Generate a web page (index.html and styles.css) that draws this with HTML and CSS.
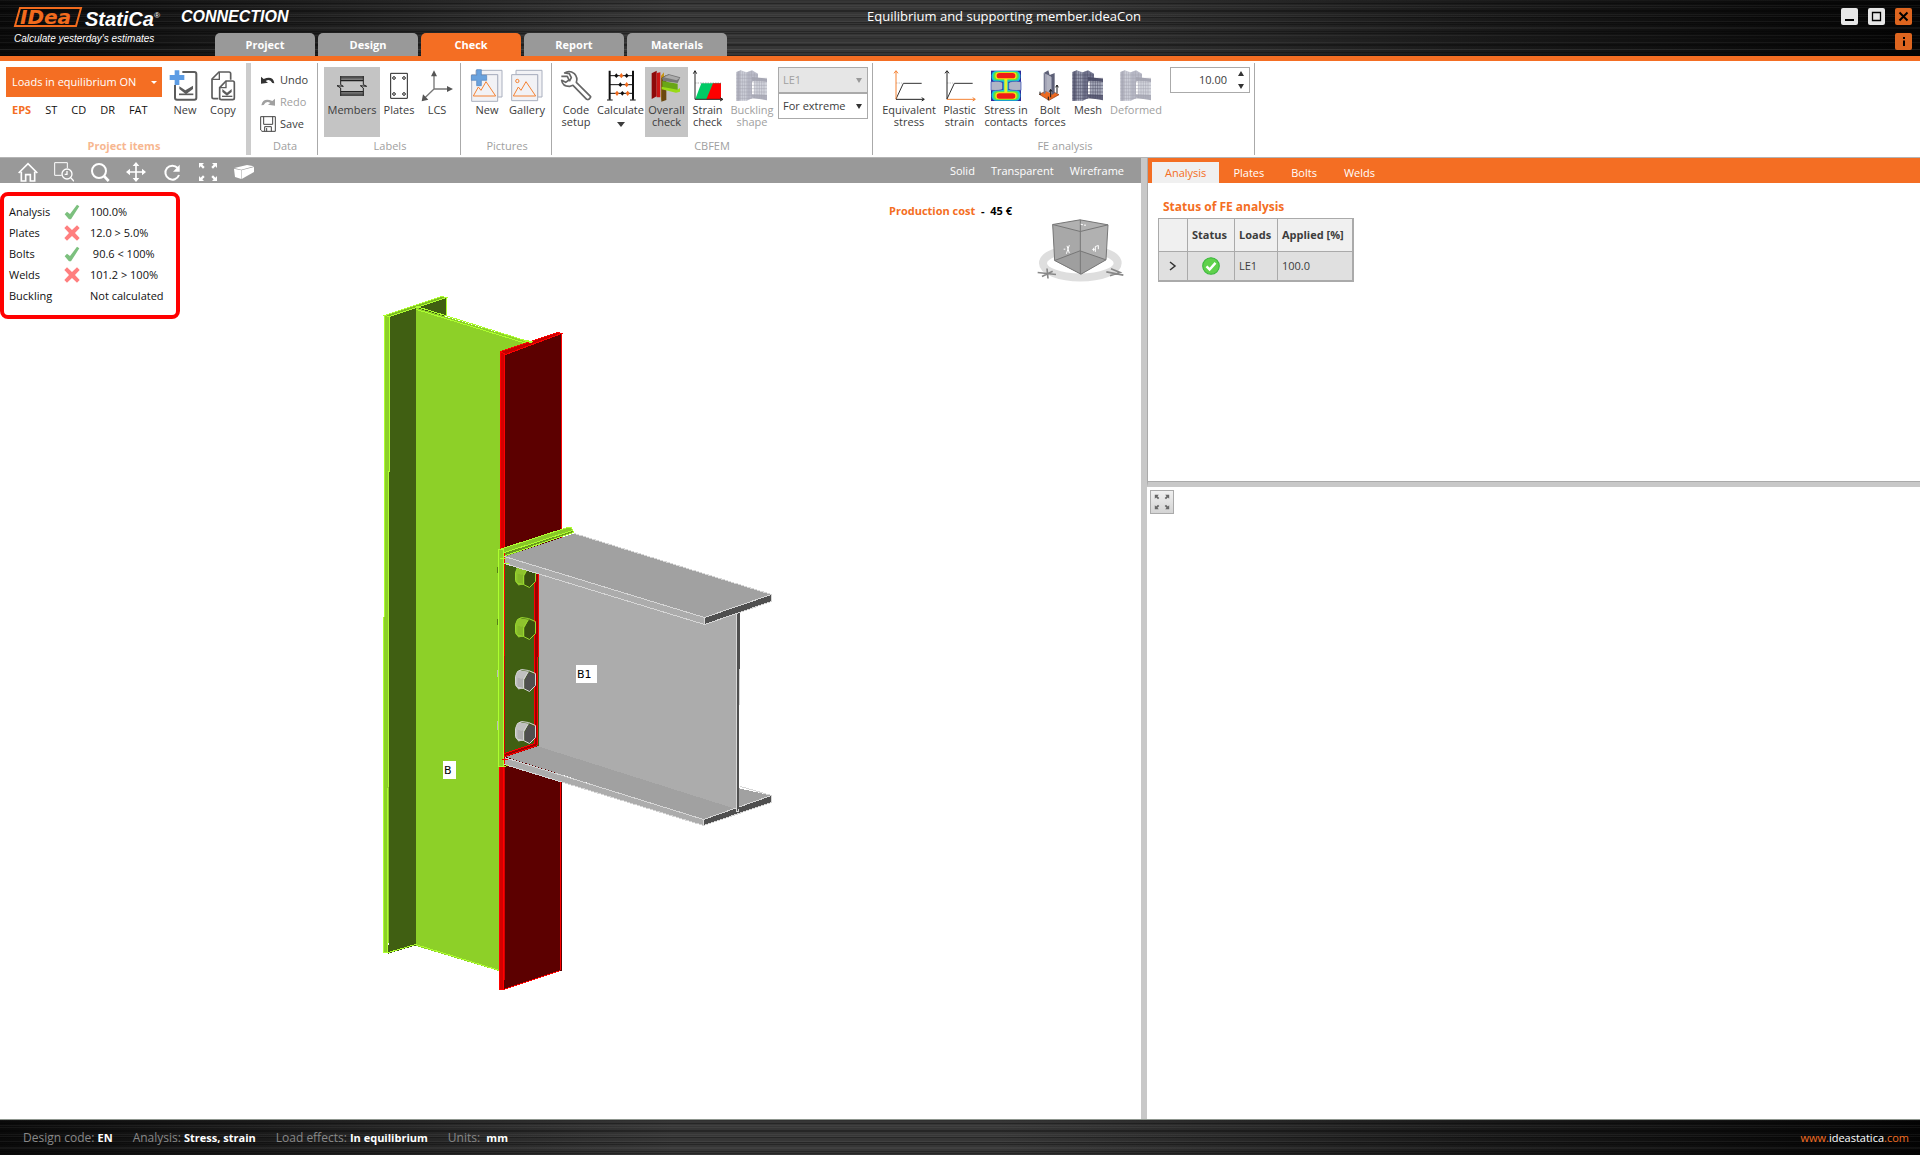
FILE: index.html
```html
<!DOCTYPE html>
<html lang="en">
<head>
    <meta charset="UTF-8">
    <meta name="viewport" content="width=device-width, initial-scale=1.0">
    <title>Equilibrium and supporting member.ideaCon</title>
    <link rel="stylesheet" href="styles.css">
</head>
<body>
    <header class="titlebar metal">
        <div class="brand">
            <div class="brand-row">
                <svg class="logo" viewBox="0 0 68 26" width="68" height="26">
                    <path d="M6 4H67L62 22H1Z" fill="none" stroke="#f26b1d" stroke-width="2"/>
                    <text x="6" y="20" class="logo-text">IDea</text>
                </svg>
                <span class="brand-name">StatiCa<sup>®</sup></span>
                <span class="brand-module">CONNECTION</span>
            </div>
            <div class="tagline">Calculate yesterday's estimates</div>
        </div>
        <nav class="tabs">
            <button class="tab">Project</button>
            <button class="tab">Design</button>
            <button class="tab active">Check</button>
            <button class="tab">Report</button>
            <button class="tab">Materials</button>
        </nav>
        <div class="doc-title">Equilibrium and supporting member.ideaCon</div>
        <div class="window-buttons">
            <button class="win" aria-label="Minimize"><svg viewBox="0 0 17 17" width="17" height="17"><path d="M4 12H13" stroke="#000" stroke-width="2"/></svg></button>
            <button class="win" aria-label="Maximize"><svg viewBox="0 0 17 17" width="17" height="17"><path d="M4.500 4.500H12.500V12.500H4.500Z" fill="none" stroke="#000" stroke-width="1.300"/></svg></button>
            <button class="win orange" aria-label="Close"><svg viewBox="0 0 17 17" width="17" height="17"><path d="M4.500 4.500L12.500 12.500M12.500 4.500L4.500 12.500" stroke="#000" stroke-width="2"/></svg></button>
            <button class="win orange info" aria-label="Info"><svg viewBox="0 0 17 17" width="17" height="17"><path d="M9 4V6M9 7.500V13" stroke="#000" stroke-width="2"/></svg></button>
        </div>
    </header>

    <section class="ribbon">
        <div class="group project-group">
            <div class="tools">
                <div class="item-box">
                    <button class="item-select">Loads in equilibrium ON <span class="caret"></span></button>
                    <div class="item-types">
                        <button class="type active">EPS</button>
                        <button class="type">ST</button>
                        <button class="type">CD</button>
                        <button class="type">DR</button>
                        <button class="type">FAT</button>
                    </div>
                </div>
                <button class="tool w38">
                    <svg class="icon" viewBox="0 0 96 96">
                        <path d="M40 9H76Q82 9 82 15V86Q82 92 76 92H24Q18 92 18 86V48" fill="none" stroke="#5c5c5c" stroke-width="6"/>
                        <path d="M31 52L49 64L72 50V60L51 76L31 60Z" fill="#5c5c5c"/><path d="M30 76H73" stroke="#5c5c5c" stroke-width="5"/>
                        <path d="M17 4H31V18H46V33H31V48H17V33H2V18H17Z" fill="#5c9ce4"/>
                    </svg>
                    New
                </button>
                <button class="tool w38">
                    <svg class="icon" viewBox="0 0 96 96">
                        <path d="M34 89H20Q15 89 15 84V30L36 9H66Q71 9 71 14V32" fill="none" stroke="#5c5c5c" stroke-width="5"/>
                        <path d="M15 31H37V9" fill="none" stroke="#5c5c5c" stroke-width="4"/>
                        <path d="M38 56L57 36H77Q82 36 82 41V87Q82 92 77 92H43Q38 92 38 87Z" fill="#fff" stroke="#5c5c5c" stroke-width="5"/>
                        <path d="M38 56H57V36" fill="none" stroke="#5c5c5c" stroke-width="4"/>
                        <path d="M46 60L60 71L74 60V69L60 80L46 69Z" fill="#5c5c5c"/><path d="M45 82H76" stroke="#5c5c5c" stroke-width="4"/>
                    </svg>
                    Copy
                </button>
            </div>
            <div class="group-name">Project items</div>
        </div>

        <div class="group data-group">
            <div class="tools data-tools">
                <button class="line-tool">
                    <svg viewBox="0 0 48 48" width="16" height="16"><path d="M3 14V35L24 32L17 27Q29 18 37 33L43 34Q39 10 11 21Z" fill="#333"/></svg>
                    Undo
                </button>
                <button class="line-tool" disabled>
                    <svg viewBox="0 0 48 48" width="16" height="16"><path d="M45 14V35L24 32L31 27Q19 18 11 33L4 34Q9 10 37 21Z" fill="#a0a0a0"/></svg>
                    Redo
                </button>
                <button class="line-tool">
                    <svg viewBox="0 0 48 48" width="16" height="16"><path d="M2 2H46V46H6L2 42Z M11 2V25H38V2 M14 46V32H34V46 M20 36V46" fill="none" stroke="#444" stroke-width="3"/></svg>
                    Save
                </button>
            </div>
            <div class="group-name">Data</div>
        </div>

        <div class="group">
            <div class="tools">
                <button class="tool w56 active">
                    <svg class="icon" viewBox="0 0 96 96">
                        <path d="M14 24H82M14 35H82M14 68H82M14 78H82" stroke="#222" stroke-width="4"/>
                        <path d="M14 29H82M14 73H82" stroke="#666" stroke-width="6"/>
                        <path d="M14 21V47L22 52L3 50L14 57V81M82 21V47L92 52L73 50L82 57V81" fill="none" stroke="#222" stroke-width="3"/>
                    </svg>
                    Members
                </button>
                <button class="tool w38">
                    <svg class="icon" viewBox="0 0 96 96">
                        <path d="M23 13H73V88H23Z" fill="#fff" stroke="#222" stroke-width="3"/>
                        <g fill="none" stroke="#222" stroke-width="3"><circle cx="33" cy="27" r="4"/><circle cx="63" cy="27" r="4"/><circle cx="33" cy="75" r="4"/><circle cx="63" cy="75" r="4"/></g>
                    </svg>
                    Plates
                </button>
                <button class="tool w38">
                    <svg class="icon" viewBox="0 0 96 96">
                        <path d="M39 14V60H84M39 60L8 90" fill="none" stroke="#777" stroke-width="4"/>
                        <path d="M30 22L39 4L48 22ZM78 51L96 60L78 69ZM2 97L6 76L22 92Z" fill="#555"/>
                    </svg>
                    LCS
                </button>
            </div>
            <div class="group-name">Labels</div>
        </div>

        <div class="group">
            <div class="tools">
                <button class="tool w40">
                    <svg class="icon" viewBox="0 0 96 96">
                        <path d="M15 4H93V84H80V17H15Z" fill="#f2f2f5" stroke="#aab0bf" stroke-width="3"/>
                        <path d="M2 17H80V97H2Z" fill="#f2f2f5" stroke="#aab0bf" stroke-width="3"/>
                        <path d="M7 81L22 54L30 64L45 38L74 81Z" fill="none" stroke="#f58233" stroke-width="3"/>
                        <path d="M17 2H31V19H47V34H31V50H17V34H1V19H17Z" fill="#6aa2dd" stroke="#4e82bd" stroke-width="2"/>
                    </svg>
                    New
                </button>
                <button class="tool w40">
                    <svg class="icon" viewBox="0 0 96 96">
                        <path d="M15 4H93V84H80V17H15Z" fill="#f2f2f5" stroke="#aab0bf" stroke-width="3"/>
                        <path d="M2 17H80V95H2Z" fill="#f2f2f5" stroke="#aab0bf" stroke-width="3"/>
                        <circle cx="19" cy="36" r="5" fill="none" stroke="#f58233" stroke-width="3"/>
                        <path d="M7 81L22 54L30 64L45 38L74 81Z" fill="none" stroke="#f58233" stroke-width="3"/>
                    </svg>
                    Gallery
                </button>
            </div>
            <div class="group-name">Pictures</div>
        </div>

        <div class="group cbfem-group">
            <div class="tools">
                <button class="tool w40">
                    <svg class="icon" viewBox="0 0 96 96">
                        <path d="M4 22H22L27 33L17 40L5 34Q8 53 30 52L39 49L80 91Q87 94 91 86L92 83L49 40Q54 26 43 14Q28 2 14 12L28 14L34 26L28 37" fill="none" stroke="#666" stroke-width="5" stroke-linejoin="round"/>
                    </svg>
                    Code setup
                </button>
                <button class="tool w49">
                    <svg class="icon" viewBox="0 0 96 96">
                        <path d="M14 5V92M84 5V92" stroke="#111" stroke-width="6"/><path d="M6 93H23M75 93H92M14 20H84M14 47H84M14 73H84" stroke="#111" stroke-width="3"/>
                        <g fill="#111"><path d="M28 20L34 13L40 20L34 27ZM59 20L65 13L71 20L65 27ZM40 47L46 40L52 47L46 54ZM46 73L52 66L58 73L52 80Z"/></g>
                        <g fill="#f26b1d"><path d="M43 20L49 12L55 20L49 28ZM59 47L65 39L71 47L65 55ZM30 73L36 65L42 73L36 81ZM62 73L68 65L74 73L68 81Z"/></g>
                    </svg>
                    Calculate <span class="caret dark"></span>
                </button>
                <button class="tool w43 active">
                    <svg class="icon" viewBox="0 0 96 96">
                        <path d="M2 13L17 5V82L2 90Z" fill="#8e0909"/><path d="M17 12L28 10V85H17Z" fill="#c91515"/>
                        <path d="M30 20L39 10V96L30 92Z" fill="#c59516"/><path d="M31 27L46 18V93L31 98Z" fill="#6a4810"/>
                        <path d="M33 27L52 15L88 25L80 42L36 36Z" fill="#777"/><path d="M38 25L54 18L86 27L77 34Z" fill="#aaa"/>
                        <path d="M34 36L80 44V67L34 55Z" fill="#69a616"/><path d="M32 53L80 62L87 57V68L75 71L32 61Z" fill="#99db16"/>
                    </svg>
                    Overall check
                </button>
                <button class="tool w39">
                    <svg class="icon" viewBox="0 0 96 96">
                        <path d="M28 43H87V90H10Z" fill="#00ca65"/><path d="M63 43H87V91H43Z" fill="#f00"/>
                        <path d="M9 8V91H90M4 14L9 5L14 14M84 86L93 91L84 96" fill="none" stroke="#222" stroke-width="3"/>
                        <path d="M9 42H87" stroke="#555" stroke-width="2" stroke-dasharray="2 3"/>
                    </svg>
                    Strain check
                </button>
                <button class="tool w50" disabled>
                    <svg class="icon faded" viewBox="0 0 96 96"><use href="#mesh-icon"/></svg>
                    Buckling shape
                </button>
                <div class="selects">
                    <div class="select-wrap off"><select aria-label="Load effect" disabled><option>LE1</option></select></div>
                    <div class="select-wrap"><select aria-label="Display for"><option>For extreme</option></select></div>
                </div>
            </div>
            <div class="group-name">CBFEM</div>
        </div>

        <div class="group fe-group">
            <div class="tools">
                <button class="tool w58">
                    <svg class="icon" viewBox="0 0 96 96">
                        <path d="M9 42H28" stroke="#777" stroke-width="2" stroke-dasharray="2 3"/><path d="M9 90L31 43H86" fill="none" stroke="#333" stroke-width="3"/>
                        <path d="M9 91V6M3 13L9 5L15 13" fill="none" stroke="#f58233" stroke-width="3"/><path d="M9 91H93M86 86L94 91L86 96" fill="none" stroke="#222" stroke-width="3"/>
                    </svg>
                    Equivalent stress
                </button>
                <button class="tool w43">
                    <svg class="icon" viewBox="0 0 96 96">
                        <path d="M9 42H28" stroke="#777" stroke-width="2" stroke-dasharray="2 3"/><path d="M9 90L31 43H86" fill="none" stroke="#333" stroke-width="3"/>
                        <path d="M9 91V6M3 13L9 5L15 13" fill="none" stroke="#222" stroke-width="3"/><path d="M9 91H93M86 86L94 91L86 96" fill="none" stroke="#f58233" stroke-width="3"/>
                    </svg>
                    Plastic strain
                </button>
                <button class="tool w50">
                    <svg class="icon" viewBox="0 0 96 96">
                        <path d="M3 5H93V96H3Z" fill="#2a2b9c"/>
                        <g><rect x="5" y="6" width="86" height="32" rx="13" fill="#16c8dc"/><rect x="5" y="63" width="86" height="32" rx="13" fill="#16c8dc"/></g>
                        <path d="M3 38Q32 34 38 42V60Q32 66 3 64ZM93 38Q62 34 56 42V60Q62 66 93 64Z" fill="#b0b5c6" stroke="#2f45b5" stroke-width="2"/>
                        <path d="M40 30H55V72H40Z" fill="#16c8dc"/>
                        <g><rect x="10" y="8" width="76" height="26" rx="12" fill="#62e33a"/><rect x="10" y="67" width="76" height="26" rx="12" fill="#62e33a"/><path d="M43 30H52V71H43Z" fill="#e7ef28"/></g>
                        <g fill="#ffdf12"><rect x="16" y="10" width="64" height="21" rx="10"/><rect x="16" y="70" width="64" height="21" rx="10"/></g>
                        <g fill="#f01c16"><rect x="20" y="12" width="56" height="16" rx="8"/><rect x="20" y="73" width="56" height="16" rx="8"/></g>
                    </svg>
                    Stress in contacts
                </button>
                <button class="tool w38">
                    <svg class="icon" viewBox="0 0 96 96">
                        <path d="M16 76L45 62L75 77L45 94Z" fill="#ed6a20" stroke="#8b350b" stroke-width="2"/>
                        <path d="M29 12L35 15V72L29 76Z" fill="#777b91"/><path d="M35 15L55 24V75L35 67Z" fill="#9fa1b4"/><path d="M29 12L43 4L47 18L62 12V72L53 79V25Z" fill="#5d6077"/><path d="M38 16L51 23V70L38 66Z" fill="#b1b3c1"/>
                        <path d="M50 85V63M46 68L50 61L54 68M69 73V49M65 55L69 48L73 55M18 78V68M43 94V83" stroke="#1a1a1a" stroke-width="3" fill="none"/>
                    </svg>
                    Bolt forces
                </button>
                <button class="tool w38">
                    <svg class="icon" viewBox="0 0 96 96">
                        <g id="mesh-icon">
                            <path d="M1 9L14 4V95L1 96Z" fill="#696b84"/><path d="M14 4L32 10V95H14Z" fill="#9fa3b7"/>
                            <path d="M32 10L48 4L66 14V30L48 38V88L32 95Z" fill="#777a93"/>
                            <path d="M48 24L93 29V39L48 35Z" fill="#52546e"/><path d="M55 35L93 39V79L55 78Z" fill="#a9adbd"/><path d="M48 76L93 78V94L48 86Z" fill="#60627b"/>
                            <path d="M7 7V95M14 4V95M20 7V95M26 9V95M32 10V95M39 8V91M46 6V89M55 12V87M63 17V87M70 28V88M77 28V89M84 29V90M1 18H66M1 28H93M1 39H93M1 49H93M1 59H93M1 69H93M1 79H93M1 88H70" stroke="#4a4b63" stroke-width="1.500"/>
                        </g>
                    </svg>
                    Mesh
                </button>
                <button class="tool w58" disabled>
                    <svg class="icon faded" viewBox="0 0 96 96"><use href="#mesh-icon"/></svg>
                    Deformed
                </button>
                <div class="spinner">
                    <input type="text" value="10.00" aria-label="Deformation scale">
                    <svg viewBox="0 0 8 20" width="8" height="20"><path d="M1 6L4 1L7 6ZM1 14H7L4 19Z" fill="#333"/></svg>
                </div>
            </div>
            <div class="group-name">FE analysis</div>
        </div>
    </section>

    <main class="workspace">
        <section class="view-pane">
            <div class="view-bar">
                <button class="view-tool" aria-label="Home"><svg viewBox="0 0 60 60" width="20" height="20"><path d="M2 33L30 5L58 33M10 29V57H23V38H37V57H50V29" fill="none" stroke="#fff" stroke-width="5"/></svg></button>
                <button class="view-tool" aria-label="Zoom window"><svg viewBox="0 0 60 60" width="20" height="20"><path d="M23 40H2V2H40V18" fill="none" stroke="#fff" stroke-width="3"/><circle cx="39" cy="36" r="15" fill="none" stroke="#fff" stroke-width="4"/><path d="M50 47L60 58M39 27V37H32" fill="none" stroke="#fff" stroke-width="4"/></svg></button>
                <button class="view-tool" aria-label="Zoom"><svg viewBox="0 0 60 60" width="20" height="20"><circle cx="27" cy="27" r="21" fill="none" stroke="#fff" stroke-width="6"/><path d="M42 42L56 57" stroke="#fff" stroke-width="8"/></svg></button>
                <button class="view-tool" aria-label="Pan"><svg viewBox="0 0 60 60" width="20" height="20"><path d="M30 5V55M5 30H55" stroke="#fff" stroke-width="5"/><path d="M20 12L30 0L40 12ZM20 48L30 60L40 48ZM12 20L0 30L12 40ZM48 20L60 30L48 40Z" fill="#fff"/></svg></button>
                <button class="view-tool" aria-label="Rotate"><svg viewBox="0 0 60 60" width="20" height="20"><path d="M47 18A21 21 0 1 0 51 39" fill="none" stroke="#fff" stroke-width="6"/><path d="M53 8V29H33Z" fill="#fff"/></svg></button>
                <button class="view-tool" aria-label="Zoom all"><svg viewBox="0 0 60 60" width="20" height="20"><path d="M3 3H18L13 8L20 15L15 20L8 13L3 18ZM57 3V18L52 13L45 20L40 15L47 8L42 3ZM3 57V42L8 47L15 40L20 45L13 52L18 57ZM57 57H42L47 52L40 45L45 40L52 47L57 42Z" fill="#fff"/></svg></button>
                <button class="view-tool" aria-label="Perspective"><svg viewBox="0 0 60 60" width="20" height="20"><path d="M0 20L22 25V51L3 45Z" fill="#fff"/><path d="M1 18L39 9L60 13L22 23Z" fill="#fff"/><path d="M23 25L60 15V30L23 51Z" fill="#fff"/></svg></button>
                <div class="view-modes">
                    <button>Solid</button>
                    <button>Transparent</button>
                    <button>Wireframe</button>
                </div>
            </div>

            <div class="viewport">
                <svg class="scene" viewBox="0 183 1141 936">
                    <defs>
                        <g id="bolt">
                            <path d="M-4 -11L-8 -9L-10 -4V5L-7 9L-3 8Z" fill="var(--b)"/>
                            <path d="M-8 -3L-1 -1V8L-8 6Z" fill="var(--a)"/>
                            <path d="M-8 -3L-4 -10L3 -9L-1 -1Z" fill="var(--b)"/>
                            <path d="M-1 0L3 -8L10 -6V5L4 11L-1 8Z" fill="var(--d)"/>
                            <path d="M-8 7L-10 4V-4L-8 -9L-4 -11L3 -10L10 -7V5L4 11L-2 8Z" fill="none" stroke="var(--c)"/>
                            <path d="M-2 8V-1L3 -9" fill="none" stroke="var(--c)"/>
                        </g>
                    </defs>
                    <g transform="translate(0.500 0.500)">
                        <!-- column web and left flange -->
                        <path d="M416 307L446 297V315L441 318Z" fill="#405f12"/>
                        <path d="M446 297V315" stroke="#adff2f"/>
                        <path d="M415 307L530 342L500 352V971L414 945Z" fill="#8dd028"/>
                        <path d="M389 316L415 307V945L388 953Z" fill="#405f12"/>
                        <path d="M384 316L389 314L388 952H383Z" fill="#8dd028"/>
                        <path d="M384 315L441 296L446 297L389 316Z" fill="#7db923" stroke="#adff2f"/>
                        <path d="M416 306L531 342M416 309L526 343" stroke="#adff2f"/>
                        <path d="M384 315L383 952H387L389 316M388 952L415 944L499 970" fill="none" stroke="#adff2f"/>
                        <!-- right flange -->
                        <path d="M505 353L561 333V970L504 989Z" fill="#5c0000"/>
                        <path d="M500 352H505L504 989H499Z" fill="#d40000"/>
                        <path d="M500 351L557 332L561 333L505 354Z" fill="#c40000" stroke="#f00"/>
                        <path d="M500 352L499 989H503L560 970L561 333M504 354L503 989" fill="none" stroke="#f00"/>
                        <path d="M525 340L532 342" stroke="#adff2f" stroke-width="2"/>
                        <!-- bolt ends behind the plate -->
                        <path d="M496 566H499V572H496ZM496 618H499V624H496Z" fill="#56801a"/>
                        <path d="M496 669H499V676H496ZM496 720H499V729H496Z" fill="#bcbcbc"/>
                        <!-- bottom flange of the beam -->
                        <path d="M504 756L538 744L771 795L703 819Z" fill="#a1a1a1"/>
                        <path d="M538 573L737 605V809L538 746Z" fill="#acacac"/>
                        <path d="M740 600H773V796L740 786Z" fill="#fff"/>
                        <path d="M504 757L703 819V825L504 764Z" fill="#acacac"/>
                        <path d="M703 819L771 795V802L703 825Z" fill="#4f4f4f"/>
                        <path d="M504 757L703 819L771 795M504 764L703 825L771 802V795L740 786M703 819V825" fill="none" stroke="#d6d6d6"/>
                        <path d="M736 608H739L738 811H736Z" fill="#4f4f4f" stroke="#d6d6d6"/>
                        <path d="M737 612H739V668H737Z" fill="#4f4f4f"/>
                        <path d="M736 668H738V808H736Z" fill="#4f4f4f"/>
                        <!-- end plate -->
                        <path d="M504 562L538 573V745L504 756Z" fill="#405f12"/>
                        <path d="M534 571L538 573L537 746L504 757V753L534 743Z" fill="#9e0000"/>
                        <path d="M534 571V743L504 753M538 573L537 745L504 756" fill="none" stroke="#f00"/>
                        <!-- bolts -->
                        <g class="bolts bolt-green"><use href="#bolt" x="525" y="576"/><use href="#bolt" x="525" y="628"/></g>
                        <g class="bolts bolt-gray"><use href="#bolt" x="525" y="680"/><use href="#bolt" x="525" y="732"/></g>
                        <!-- top flange of the beam -->
                        <path d="M504 556L574 533L771 594L704 617Z" fill="#a1a1a1"/>
                        <path d="M504 556L704 617V624L504 563Z" fill="#acacac"/>
                        <path d="M704 617L771 594V601L704 624Z" fill="#4f4f4f"/>
                        <path d="M504 556L704 617L771 594M504 563L704 624L771 601V594L574 533M704 617V624" fill="none" stroke="#d6d6d6"/>
                        <path d="M503 549L569 526L573 532L505 556Z" fill="#69971d"/>
                        <path d="M499 549L566 527H571L572 530L504 552Z" fill="#88c727"/>
                        <path d="M499 549L567 527H571L573 532L505 555M504 552L572 530" fill="none" stroke="#adff2f"/>
                        <path d="M498 549H503V766H498Z" fill="#8dd028" stroke="#adff2f"/>
                        <path d="M504 757V763M501 759H507" stroke="#f00"/>
                        <path d="M503 766L508 765M499 558H505M504 563H508" stroke="#adff2f"/>
                    </g>
                    <rect x="443" y="761" width="13" height="18" fill="#fff"/>
                    <text x="444" y="774" class="member-label">B</text>
                    <rect x="576" y="665" width="21" height="18" fill="#fff"/>
                    <text x="577" y="678" class="member-label">B1</text>
                </svg>

                <table class="check-box">
                    <tr><th scope="row">Analysis</th><td><svg class="mark" viewBox="0 0 48 48"><use href="#ok"/></svg></td><td>100.0%</td></tr>
                    <tr><th scope="row">Plates</th><td><svg class="mark" viewBox="0 0 48 48"><use href="#bad"/></svg></td><td>12.0 &gt; 5.0%</td></tr>
                    <tr><th scope="row">Bolts</th><td><svg class="mark" viewBox="0 0 48 48"><path id="ok" d="M2 31L9 23L18 30L39 2L46 7L21 46H15Z" fill="#7cc07e"/></svg></td><td>&nbsp;90.6 &lt; 100%</td></tr>
                    <tr><th scope="row">Welds</th><td><svg class="mark" viewBox="0 0 48 48"><path id="bad" d="M9 1L24 15L39 1L47 9L33 24L47 39L39 47L24 33L9 47L1 39L15 24L1 9Z" fill="#ff7f7f"/></svg></td><td>101.2 &gt; 100%</td></tr>
                    <tr><th scope="row">Buckling</th><td></td><td>Not calculated</td></tr>
                </table>

                <div class="cost"><span>Production cost</span>&nbsp; - &nbsp;45 €</div>

                <svg class="nav-cube" viewBox="530 200 270 200">
                    <ellipse cx="663" cy="338" rx="112" ry="43" fill="none" stroke="#dedede" stroke-width="24"/>
                    <path d="M580 222L662 208L746 223L740 328L665 371L586 330Z" fill="#b1b1b1"/>
                    <path d="M580 222L663 243L665 371L586 330Z" fill="#a8a8a8"/>
                    <path d="M586 330L662 301L740 328L665 371Z" fill="#9f9f9f"/>
                    <path d="M580 222L662 208L746 223L740 328L665 371L586 330ZM580 222L663 243L746 223M663 208V371M586 330L662 301L740 328" fill="none" stroke="#777" stroke-width="3"/>
                    <path d="M613 296H618M623 286L630 308M630 284L621 310M699 297H706M703 292V302M708 288V304M708 288L717 285V296M664 221L671 223M674 224H680" stroke="#fff" stroke-width="3" fill="none"/>
                    <path d="M535 366L590 372M548 378L580 362M563 354L566 384M741 364L792 374M755 355L782 366L752 376" stroke="#888" stroke-width="5" fill="none"/>
                </svg>
            </div>
        </section>

        <section class="side-pane">
            <div class="result-pane">
                <nav class="side-tabs">
                    <button class="side-tab active">Analysis</button>
                    <button class="side-tab">Plates</button>
                    <button class="side-tab">Bolts</button>
                    <button class="side-tab">Welds</button>
                </nav>
                <h2>Status of FE analysis</h2>
                <table class="status-table">
                    <thead>
                        <tr><th class="col-open"></th><th class="col-status">Status</th><th class="col-loads">Loads</th><th class="col-applied">Applied [%]</th></tr>
                    </thead>
                    <tbody>
                        <tr>
                            <td class="center"><svg viewBox="0 0 8 12" width="8" height="12"><path d="M1 2L6 6L1 10" fill="none" stroke="#333" stroke-width="1.500"/></svg></td>
                            <td class="center"><svg viewBox="0 0 52 52" width="18" height="18"><circle cx="26" cy="26" r="24" fill="#5fd14b" stroke="#37b53a" stroke-width="3"/><path d="M13 27L22 36L39 17" fill="none" stroke="#fff" stroke-width="7"/></svg></td>
                            <td>LE1</td>
                            <td>100.0</td>
                        </tr>
                    </tbody>
                </table>
            </div>
            <div class="detail-pane">
                <button class="fit-button" aria-label="Zoom all"><svg viewBox="0 0 60 60" width="16" height="16"><path d="M3 3H18L13 8L20 15L15 20L8 13L3 18ZM57 3V18L52 13L45 20L40 15L47 8L42 3ZM3 57V42L8 47L15 40L20 45L13 52L18 57ZM57 57H42L47 52L40 45L45 40L52 47L57 42Z" fill="#666"/></svg></button>
            </div>
        </section>
    </main>

    <footer class="statusbar metal">
        <div>Design code: <b>EN</b></div>
        <div>Analysis: <b>Stress, strain</b></div>
        <div>Load effects: <b>In equilibrium</b></div>
        <div>Units: &nbsp;<b>mm</b></div>
        <a href="#" class="site">www.<span>ideastatica</span>.com</a>
    </footer>
</body>
</html>
```
FILE: styles.css
```css
* {
    box-sizing: border-box;
}

body {
    margin: 0;
    height: 100vh;
    display: flex;
    flex-direction: column;
    font-family: 'Open Sans', 'Noto Sans', sans-serif;
    font-size: 11px;
    line-height: 12px;
    color: #3c3c3c;
    background-color: white;
    overflow: hidden;
}

button, input, select {
    font: inherit;
    color: inherit;
    border: none;
    background: none;
    padding: 0;
    margin: 0;
}

button {
    cursor: pointer;
}

svg {
    display: block;
    flex-shrink: 0;
}

.metal {
    background:
        repeating-linear-gradient(180deg, rgba(255, 255, 255, 0.05) 0 1px, transparent 1px 3px, rgba(0, 0, 0, 0.3) 3px 4px, transparent 4px 7px),
        repeating-linear-gradient(180deg, rgba(0, 0, 0, 0.3) 0 1px, transparent 1px 5px, rgba(255, 255, 255, 0.05) 5px 6px, transparent 6px 11px),
        linear-gradient(90deg, #0a0a0a, #181818 12%, #363636 35%, #363636 52%, #181818 78%, #040404);
}

/* title bar */
.titlebar {
    display: flex;
    height: 61px;
    flex-shrink: 0;
    border-bottom: 5px solid #f46e23;
}

.brand {
    width: 215px;
    flex-shrink: 0;
    padding: 4px 0 0 14px;
    color: white;
    font-family: 'Liberation Sans', Arial, sans-serif;
    font-style: italic;
    white-space: nowrap;
}

.brand-row {
    display: flex;
    height: 26px;
    align-items: center;
}

.logo {
    overflow: visible;
}

.logo-text {
    font-family: 'DejaVu Sans', sans-serif;
    font-size: 20px;
    font-weight: bold;
    font-style: italic;
    fill: #f26b1d;
}

.brand-name {
    flex-shrink: 0;
    font-size: 20px;
    font-weight: bold;
    padding-left: 3px;
    width: 99px;
}

.brand-name sup {
    font-size: 8px;
    font-weight: normal;
}

.brand-module {
    font-size: 16px;
    font-weight: bold;
}

.tagline {
    margin-top: 3px;
    font-size: 10px;
}

.tabs {
    display: flex;
    align-items: flex-end;
    gap: 3px;
}

.tab {
    width: 100px;
    height: 23px;
    border-radius: 5px 5px 0 0;
    background-color: #999;
    color: white;
    font-weight: bold;
}

.tab.active {
    background-color: #f46e23;
}

.doc-title {
    flex: 1;
    padding: 8px 0 0 140px;
    font-size: 13px;
    line-height: 16px;
    color: white;
}

.window-buttons {
    display: grid;
    grid-template-columns: 17px 17px 17px;
    grid-auto-rows: 17px;
    gap: 8px 10px;
    padding: 8px 8px 0 0;
}

.win {
    border-radius: 2px;
    background-color: #e6e6e6;
}

.win.orange {
    background-color: #dd651f;
}

.win.info {
    grid-column: 3;
}

/* ribbon */
.ribbon {
    display: flex;
    height: 97px;
    flex-shrink: 0;
    padding: 2px 0;
    border-bottom: 1px solid #b4b4b4;
}

.group {
    display: flex;
    flex-direction: column;
    flex-shrink: 0;
    justify-content: space-between;
    padding: 4px 4px 2px 6px;
    border-right: 1px solid #aaa;
}

.project-group {
    width: 251px;
    border-right: 5px solid #ccc;
}

.data-group {
    width: 67px;
}

.cbfem-group {
    padding-left: 4px;
}

.fe-group {
    padding-left: 7px;
}

.tools {
    display: flex;
    align-items: flex-start;
}

.group-name {
    text-align: center;
    line-height: 14px;
    color: #a0a0a0;
}

.project-group .group-name {
    color: #f7b790;
    font-weight: bold;
}

.item-box {
    width: 156px;
    flex-shrink: 0;
    margin-right: 4px;
}

.item-select {
    display: flex;
    width: 100%;
    height: 30px;
    padding: 0 5px 0 6px;
    align-items: center;
    justify-content: space-between;
    background-color: #f46e23;
    color: white;
}

.caret {
    width: 0;
    height: 0;
    border: 3px solid transparent;
    border-top-color: currentColor;
    border-bottom: none;
}

.caret.dark {
    border-width: 5px 4px 0;
    margin-top: 6px;
}

.item-types {
    display: flex;
    gap: 14px;
    padding: 7px 6px 0;
    color: #111;
}

.type.active {
    color: #f46e23;
    font-weight: bold;
}

.tool {
    display: flex;
    flex-direction: column;
    flex-shrink: 0;
    align-items: center;
    height: 70px;
    padding-top: 2px;
    text-align: center;
}

.tool.active {
    background-color: #c4c4c4;
}

.tool:disabled, .line-tool:disabled {
    color: #a0a0a0;
}

.w38 { width: 38px; }
.w39 { width: 39px; }
.w40 { width: 40px; }
.w43 { width: 43px; }
.w49 { width: 49px; }
.w50 { width: 50px; }
.w56 { width: 56px; }
.w58 { width: 58px; }

.icon {
    width: 32px;
    height: 32px;
    margin-bottom: 3px;
    overflow: visible;
}

.icon.faded {
    opacity: 0.5;
}

.data-tools {
    flex-direction: column;
    padding: 2px 0 0 3px;
}

.line-tool {
    display: flex;
    height: 22px;
    gap: 4px;
    align-items: center;
}

.selects {
    padding-left: 1px;
}

.select-wrap {
    position: relative;
    width: 90px;
    height: 26px;
    border: 1px solid #aaa;
}

.select-wrap::after {
    content: '';
    position: absolute;
    top: 10px;
    right: 5px;
    border: 3px solid transparent;
    border-top: 5px solid #333;
    border-bottom: none;
}

.select-wrap.off {
    background-color: #e6e6e6;
    color: #a0a0a0;
}

.select-wrap.off::after {
    border-top-color: #999;
}

.select-wrap select {
    width: 100%;
    height: 100%;
    padding-left: 4px;
    appearance: none;
    opacity: 1;
}

.spinner {
    display: flex;
    width: 80px;
    height: 26px;
    margin-left: 5px;
    padding-right: 4px;
    align-items: center;
    border: 1px solid #aaa;
}

.spinner input {
    flex: 1;
    min-width: 0;
    margin-right: 10px;
    text-align: right;
}

/* workspace */
.workspace {
    display: flex;
    flex: 1;
    min-height: 0;
}

.view-pane {
    display: flex;
    flex: 1;
    flex-direction: column;
}

.view-bar {
    display: flex;
    height: 25px;
    padding: 0 17px 0 10px;
    align-items: center;
    background-color: #999;
    color: white;
}

.view-tool {
    display: flex;
    width: 36px;
    justify-content: center;
    padding-top: 3px;
}

.view-modes {
    display: flex;
    gap: 16px;
    margin-left: auto;
}

.viewport {
    position: relative;
    flex: 1;
    min-height: 0;
}

.scene {
    width: 100%;
    height: 100%;
    shape-rendering: crispEdges;
}

.bolts {
    shape-rendering: auto;
}

.bolt-green {
    --a: #84b72a;
    --b: #8fc32e;
    --c: #98d82d;
    --d: #39500f;
}

.bolt-gray {
    --a: #b0b0b0;
    --b: #c0c0c0;
    --c: #d6d6d6;
    --d: #4f4f4f;
}

.member-label {
    font-family: 'DejaVu Sans', sans-serif;
    font-size: 11px;
    fill: black;
}

.check-box {
    position: absolute;
    top: 9px;
    left: 0;
    width: 180px;
    padding: 5px 0 9px 5px;
    border: 4px solid red;
    border-radius: 8px;
    border-spacing: 0;
    color: #111;
    white-space: nowrap;
}

.check-box th, .check-box td {
    height: 21px;
    padding: 0;
    text-align: left;
    font-weight: normal;
}

.check-box th {
    width: 55px;
}

.check-box td:nth-child(2) {
    width: 26px;
}

.mark {
    width: 16px;
    height: 16px;
}

.cost {
    position: absolute;
    top: 22px;
    right: 129px;
    color: black;
    font-weight: bold;
}

.cost span {
    color: #f46e23;
}

.nav-cube {
    position: absolute;
    top: 34px;
    right: 15px;
    width: 90px;
    height: 67px;
}

.side-pane {
    display: flex;
    width: 779px;
    flex-direction: column;
    border-left: 6px solid #c8c8c8;
}

.result-pane {
    height: 329px;
    border-left: 1px solid #aaa;
    border-bottom: 5px solid #c8c8c8;
    box-shadow: inset 0 -1px #aaa;
}

.side-tabs {
    display: flex;
    height: 25px;
    padding: 4px 4px 0;
    gap: 1px;
    background-color: #f46e23;
    color: white;
}

.side-tab {
    padding: 0 13px;
}

.side-tab.active {
    background-color: #f0f0f0;
    color: #f46e23;
}

h2 {
    margin: 16px 0 3px 15px;
    font-size: 12px;
    line-height: 16px;
    color: #f46e23;
}

.status-table {
    margin-left: 10px;
    border-collapse: collapse;
    border: 2px solid #aaa;
    border-width: 1px 2px 2px 1px;
}

.status-table th, .status-table td {
    padding: 0 4px;
    border: 1px solid #aaa;
    text-align: left;
}

.status-table th {
    height: 33px;
    background-color: #f0f0f0;
}

.status-table td {
    height: 29px;
    background-color: #e0e0e0;
}

.col-open { width: 29px; }
.col-status { width: 47px; }
.col-loads { width: 43px; }
.col-applied { width: 75px; }

.status-table .center svg {
    margin: auto;
}

.detail-pane {
    flex: 1;
    padding: 3px;
}

.fit-button {
    display: flex;
    width: 24px;
    height: 24px;
    align-items: center;
    justify-content: center;
    border: 1px solid #aaa;
    background: linear-gradient(#f0f0f0, #d4d4d4);
}

/* status bar */
.statusbar {
    display: flex;
    height: 36px;
    flex-shrink: 0;
    padding: 0 11px 0 23px;
    gap: 20px;
    align-items: center;
    border-top: 1px solid #8d958d;
    font-size: 12px;
    color: #888;
}

.statusbar b {
    font-size: 11px;
    color: white;
}

.site {
    margin-left: auto;
    font-size: 11px;
    color: #f46e23;
    text-decoration: none;
}

.site span {
    color: white;
}
```
